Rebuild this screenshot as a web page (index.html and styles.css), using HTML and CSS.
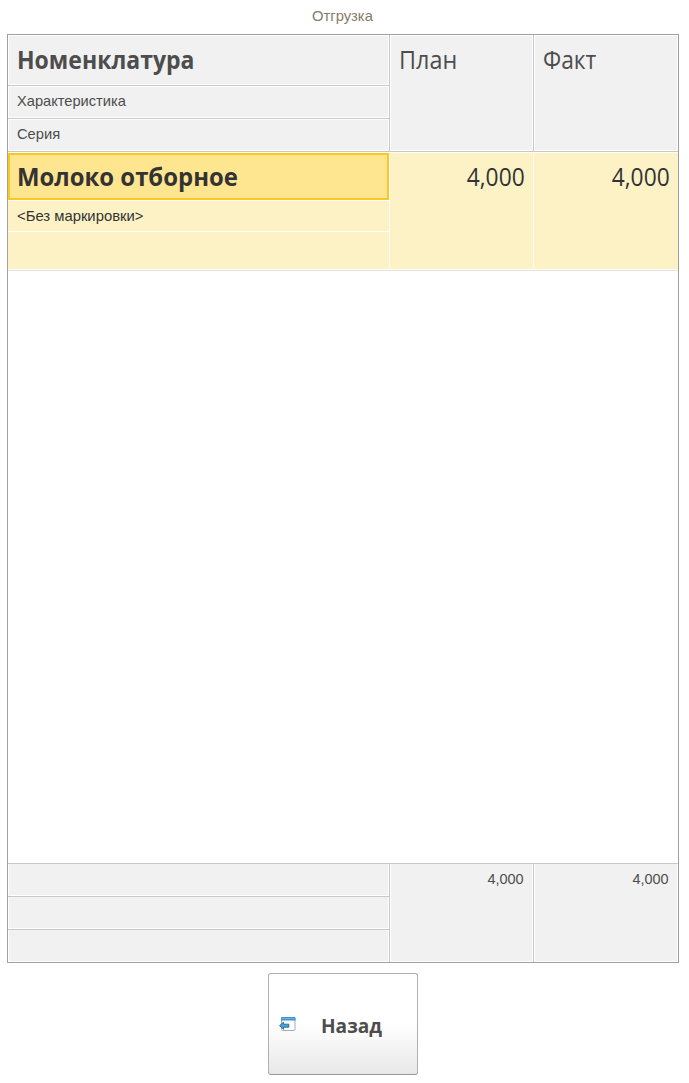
FILE: index.html
```html
<!DOCTYPE html>
<html lang="ru">
<head>
<meta charset="utf-8">
<title>Отгрузка</title>
<link rel="stylesheet" href="styles.css">
</head>
<body>
<main class="page">
  <h1 class="title"><span>Отгрузка</span></h1>
  <section class="table">
    <div class="band head">
      <div class="stack">
        <div class="cell big bold"><span class="t-name">Номенклатура</span></div>
        <div class="cell small"><span class="t-char">Характеристика</span></div>
        <div class="cell small"><span class="t-series">Серия</span></div>
      </div>
      <div class="cell big"><span class="t-plan">План</span></div>
      <div class="cell big"><span class="t-fact">Факт</span></div>
    </div>
    <div class="band row">
      <div class="stack">
        <div class="cell big bold selected"><span class="t-milk">Молоко отборное</span></div>
        <div class="cell small"><span class="t-mark">&lt;Без маркировки&gt;</span></div>
        <div class="cell"></div>
      </div>
      <div class="cell big num"><span class="t-num">4,000</span></div>
      <div class="cell big num"><span class="t-num">4,000</span></div>
    </div>
    <div class="empty"></div>
    <div class="band foot">
      <div class="stack">
        <div class="cell"></div>
        <div class="cell"></div>
        <div class="cell"></div>
      </div>
      <div class="cell small num"><span class="t-total">4,000</span></div>
      <div class="cell small num"><span class="t-total">4,000</span></div>
    </div>
  </section>
  <button class="back" type="button">
    <svg class="icon" width="18" height="16" viewBox="0 0 18 16">
      <rect x="2.5" y="1.5" width="13.500" height="13" rx="1" fill="#fff" stroke="#a3adb8"/>
      <path d="M2 4.500V2q0-1 1-1h12.500q1 0 1 1v2.500z" fill="#4295d2"/>
      <path d="M3 2.500h12.500" stroke="#62b2e8"/>
      <path d="M.5 9.700 4.500 6.200v2h5.300v3H4.500v2z" fill="#47a5df" stroke="#2d6287" stroke-width=".9"/>
    </svg>
    <span class="t-back">Назад</span>
  </button>
</main>
</body>
</html>
```
FILE: styles.css
```css
* { box-sizing: border-box; }
body { margin: 0; background: #fff; font-family: "Liberation Sans", Arial, sans-serif; }
.page { width: 689px; height: 1083px; padding: 0 10px 0 7px; display: flex; flex-direction: column; }
.title { margin: 0; height: 34px; padding-top: 7px; font-size: 15px; line-height: 18px; font-weight: 400; color: #857b69; text-align: center; }
.title span { display: inline-block; transform: scaleX(.985); transform-origin: left; }
.table { height: 929px; border: 1px solid #a0a0a0; display: flex; flex-direction: column; }
.band { display: grid; grid-template-columns: 381px 143px 144px; column-gap: 1px; flex: none; }
.stack { display: grid; row-gap: 1px; }
.cell { overflow: hidden; white-space: nowrap; }
.cell span { display: inline-block; transform-origin: left; }
.cell.num span { transform-origin: right; }
.big { font-family: "Open Sans", "Noto Sans", sans-serif; font-size: 25px; line-height: 34px; }
.bold { font-weight: 700; }
.small { font-size: 15px; line-height: 18px; padding: 6px 9px 0; }
.num { text-align: right; }

/* Condensed widths of the table labels */
.t-name { transform: scaleX(.921); }
.t-milk { transform: scaleX(.956); }
.t-plan { transform: scaleX(.935); }
.t-fact { transform: scaleX(.912); }
.t-num { transform: scaleX(.91); }
.t-char { transform: scaleX(.976); }
.t-series { transform: scaleX(.98); }
.t-mark { transform: scaleX(.988); }
.t-total { transform: scaleX(.963); }

.head { height: 117px; background: #c8c8c8; border-bottom: 1px solid #c8c8c8; color: #4d4d4d; }
.head .stack { grid-template-rows: 50px 32px 32px; }
.head .cell { background: #f1f1f1; border: 1px solid #fff; }
.head .big { padding: 6px 8px 0; }
.head .small { padding: 5px 8px 0; }

.row { height: 119px; padding: 1px 0; background: #fffdf6; border-bottom: 1px solid #e3e3e3; color: #333; }
.row .stack { grid-template-rows: 47px 30px 37px; }
.row .cell { background: #fdf2c6; }
.row .num { padding: 6px 8px 0; }
.row .selected { background: #fee590; border: 2px solid #f9c922; padding: 4px 7px 0; }

.empty { flex: 1; }

.foot { height: 99px; background: #c8c8c8; border-top: 1px solid #c8c8c8; color: #4d4d4d; }
.foot .stack { grid-template-rows: 32px 32px 32px; }
.foot .cell { background: #f1f1f1; border: 1px solid #fff; border-top: 0; }
.foot .small { padding: 6px 8px 0; }

.back { width: 150px; height: 102px; margin: 10px 0 0 261px; padding: 0 0 0 10px; display: flex; align-items: center; border: 1px solid #b0b0b0; border-bottom-color: #989898; border-radius: 3px; background: linear-gradient(#fff 50%, #e8e8e8); color: #4d4d4d; font: 700 20px/28px "Open Sans", "Noto Sans", sans-serif; }
.icon { flex: none; margin-right: 24px; }
.t-back { display: inline-block; padding-top: 3px; transform: scaleX(.955); transform-origin: left; }
```
